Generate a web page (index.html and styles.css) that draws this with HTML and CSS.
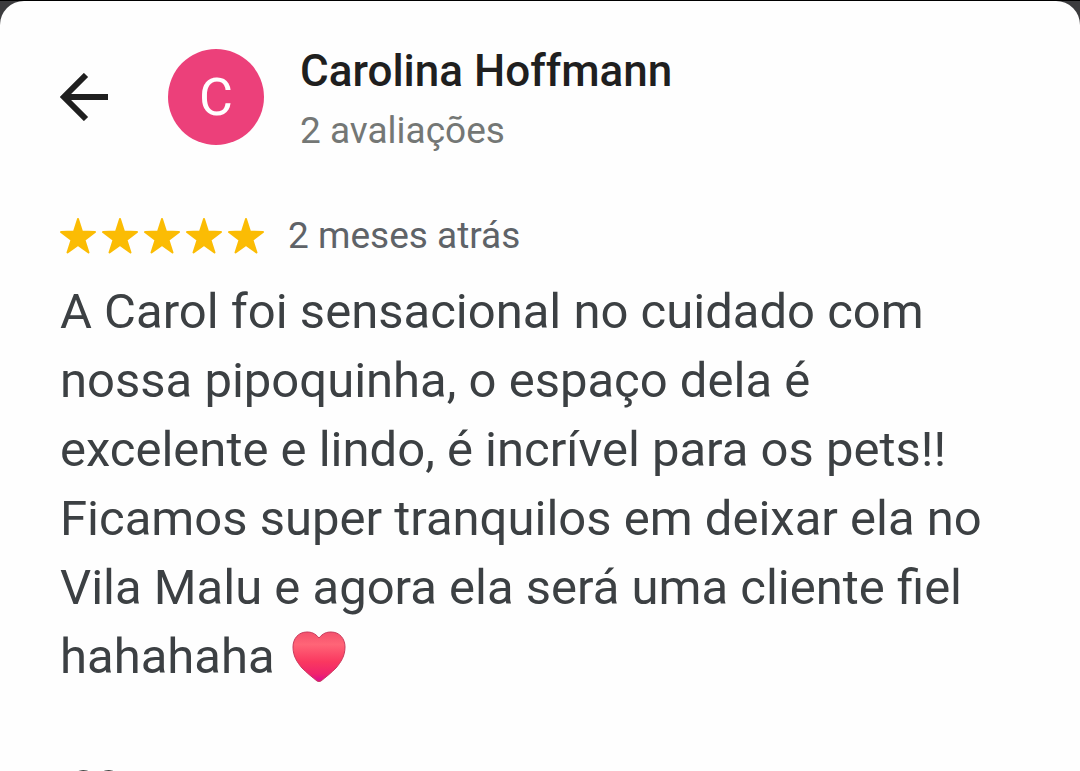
FILE: index.html
```html
<!DOCTYPE html>
<html lang="pt-BR">
<head>
    <meta charset="UTF-8">
    <meta name="viewport" content="width=device-width, initial-scale=1.0">
    <title>Avaliação - Carolina Hoffmann</title>
    <link rel="stylesheet" href="styles.css">
</head>
<body>
    <main class="sheet">
        <header class="header">
            <button type="button" class="back-btn" aria-label="Voltar">
                <svg viewBox="0 0 48 48" aria-hidden="true">
                    <path d="M26 2 4 24l22 22M4 24h44" fill="none" stroke="currentColor" stroke-width="6"/>
                </svg>
            </button>
            <div class="avatar" aria-hidden="true">C</div>
            <div class="author">
                <h1>Carolina Hoffmann</h1>
                <p>2 avaliações</p>
            </div>
        </header>

        <div class="rating">
            <svg class="stars" viewBox="0 0 204 36" role="img" aria-label="5 de 5 estrelas">
                <defs>
                    <path id="star" d="M18 1l4 12.500 13 .500-10.500 8 4 12.500L18 27 7.500 34.500l4-12.500L1 14l13-.500z" stroke-width="2" stroke-linejoin="round"/>
                </defs>
                <use href="#star"/>
                <use href="#star" x="42"/>
                <use href="#star" x="84"/>
                <use href="#star" x="126"/>
                <use href="#star" x="168"/>
            </svg>
            <span class="date">2 meses atrás</span>
        </div>

        <p class="review">
            A Carol foi sensacional no cuidado com<br>
            nossa pipoquinha, o espaço dela é<br>
            excelente e lindo, é incrível para os pets!!<br>
            Ficamos super tranquilos em deixar ela no<br>
            Vila Malu e agora ela será uma cliente fiel<br>
            hahahaha
            <svg class="heart" viewBox="0 0 54 52" role="img" aria-label="coração">
                <defs>
                    <linearGradient id="heartFill" x1="0" y1="0" x2="0" y2="1">
                        <stop offset="0" stop-color="#f4506c"/>
                        <stop offset="0.25" stop-color="#ff6577"/>
                        <stop offset="0.6" stop-color="#fa3860"/>
                        <stop offset="0.85" stop-color="#f0246c"/>
                        <stop offset="1" stop-color="#dc0b91"/>
                    </linearGradient>
                </defs>
                <path d="M27 7C23 2 19 1 15 1 6 1 1 8 1 16c0 9 4 15 9 21 5 5 10 9 15 13q2 1 4 0c5-4 10-8 15-13 5-6 9-12 9-21C53 8 48 1 39 1c-4 0-8 1-12 6z" fill="url(#heartFill)" stroke="#c93b5c" stroke-width="1"/>
            </svg>
        </p>

        <button type="button" class="like-btn" aria-label="Curtir">
            <svg viewBox="0 0 52 48" aria-hidden="true">
                <path d="M26 12C20-1 2 0 2 16c0 12 12 20 24 30 12-10 24-18 24-30C50 0 32-1 26 12z" fill="none" stroke="currentColor" stroke-width="4"/>
            </svg>
        </button>
    </main>
</body>
</html>
```

FILE: styles.css
```css
* {
    margin: 0;
    padding: 0;
    box-sizing: border-box;
}

body {
    font-family: Roboto, "Liberation Sans", sans-serif;
    background: #3c3c3e;
    border-top: 1px solid #000;
    color: #3c4043;
}

.sheet {
    min-height: 100vh;
    padding: 32px 60px;
    background: #fefefe;
    border-radius: 24px 24px 0 0;
}

button {
    display: block;
    border: none;
    background: none;
    cursor: pointer;
}

svg {
    display: block;
}

.header {
    display: flex;
    align-items: center;
}

.back-btn {
    width: 48px;
    height: 48px;
    margin-right: 60px;
    color: #1f1f1f;
}

.avatar {
    display: flex;
    align-items: center;
    justify-content: center;
    width: 96px;
    height: 96px;
    margin-right: 36px;
    border-radius: 50%;
    background: #ec407a;
    color: #fff;
    font-size: 52px;
}

.author {
    padding-top: 8px;
    line-height: 60px;
}

.author h1 {
    color: #1f1f1f;
    font-size: 44px;
    font-weight: 500;
}

.author p {
    color: #747775;
    font-size: 37px;
}

.rating {
    display: flex;
    align-items: center;
    gap: 24px;
    margin-top: 45px;
    line-height: 60px;
}

.stars {
    width: 204px;
    height: 36px;
    fill: #fbbc04;
    stroke: #fbbc04;
}

.date {
    color: #5f6368;
    font-size: 37px;
}

.review {
    margin-top: 11px;
    font-size: 49px;
    line-height: 69px;
}

.heart {
    display: inline-block;
    width: 54px;
    height: 52px;
    margin-left: 5px;
    vertical-align: -10px;
}

.like-btn {
    width: 52px;
    height: 48px;
    margin-top: 78px;
    margin-left: 10px;
    color: #444746;
}
```
